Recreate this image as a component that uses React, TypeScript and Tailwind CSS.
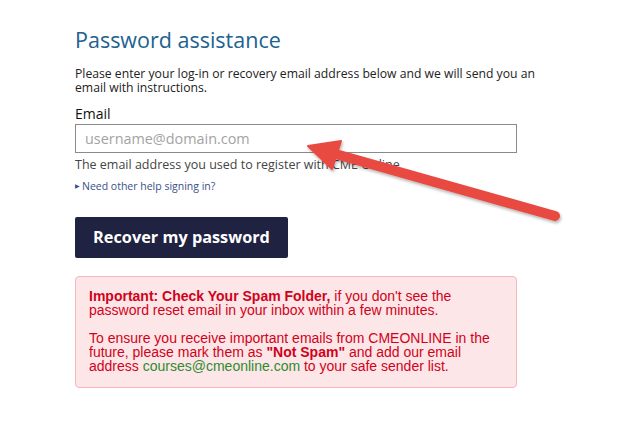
export default function App() {
  return (
    <div className="relative w-[624px] h-[444px] bg-white overflow-hidden font-['Open_Sans',sans-serif]">
      <div className="pl-[75px] pt-[26px] w-[540px]">
        <h1 className="text-[21.5px] leading-[28px] text-[#21618f]">Password assistance</h1>
        <p className="mt-[13px] w-[470px] text-[12.2px] leading-[14px] text-[#222]">
          Please enter your log-in or recovery email address below and we will send you an email with instructions.
        </p>
        <label className="block mt-[10px] text-[14px] leading-[18px] text-[#111]">Email</label>
        <input
          type="text"
          placeholder="username@domain.com"
          className="block mt-[1px] w-[442px] h-[29px] border border-[#8a8a8a] px-[9px] text-[14.4px] placeholder:text-[#a3a3a3] outline-none"
        />
        <p className="mt-[4px] text-[12.5px] leading-[16px] text-[#444]">
          The email address you used to register with CME Online
        </p>
        <a href="#" className="mt-[6px] flex items-center gap-[2px] text-[10.5px] leading-[14px] text-[#3a4f8c]">
          <span className="text-[6px] text-[#3a4f8c]">▶</span>
          Need other help signing in?
        </a>
        <button className="mt-[24px] w-[213px] h-[41px] rounded-[2px] bg-[#1f2240] text-white text-[16.3px] font-bold">
          Recover my password
        </button>
        <div className="mt-[18px] w-[442px] rounded-[4px] border border-[#f3b9bd] bg-[#fde6e7] px-[13px] pt-[12px] pb-[14px] font-['Liberation_Sans',Arial,sans-serif] text-[14px] leading-[14px] text-[#d0021b]">
          <p>
            <b>Important: Check Your Spam Folder,</b> if you don't see the password reset email in your inbox within a few minutes.
          </p>
          <p className="mt-[14px]">
            To ensure you receive important emails from CMEONLINE in the future, please mark them as <b>"Not Spam"</b> and add our email address <span className="text-[#2e8b2e]">courses@cmeonline.com</span> to your safe sender list.
          </p>
        </div>
      </div>
      <svg className="absolute left-0 top-0" width="624" height="444" viewBox="0 0 624 444">
        <defs>
          <filter id="sh" x="-10%" y="-10%" width="120%" height="130%">
            <feDropShadow dx="1" dy="2" stdDeviation="1.5" floodColor="#000" floodOpacity="0.3" />
          </filter>
        </defs>
        <g filter="url(#sh)" fill="#e84a40" stroke="#e84a40">
          <line x1="555" y1="216" x2="332" y2="153" strokeWidth="10" strokeLinecap="round" />
          <polygon points="308,146 341,141 332,169" strokeWidth="2" strokeLinejoin="round" />
        </g>
      </svg>
    </div>
  );
}
